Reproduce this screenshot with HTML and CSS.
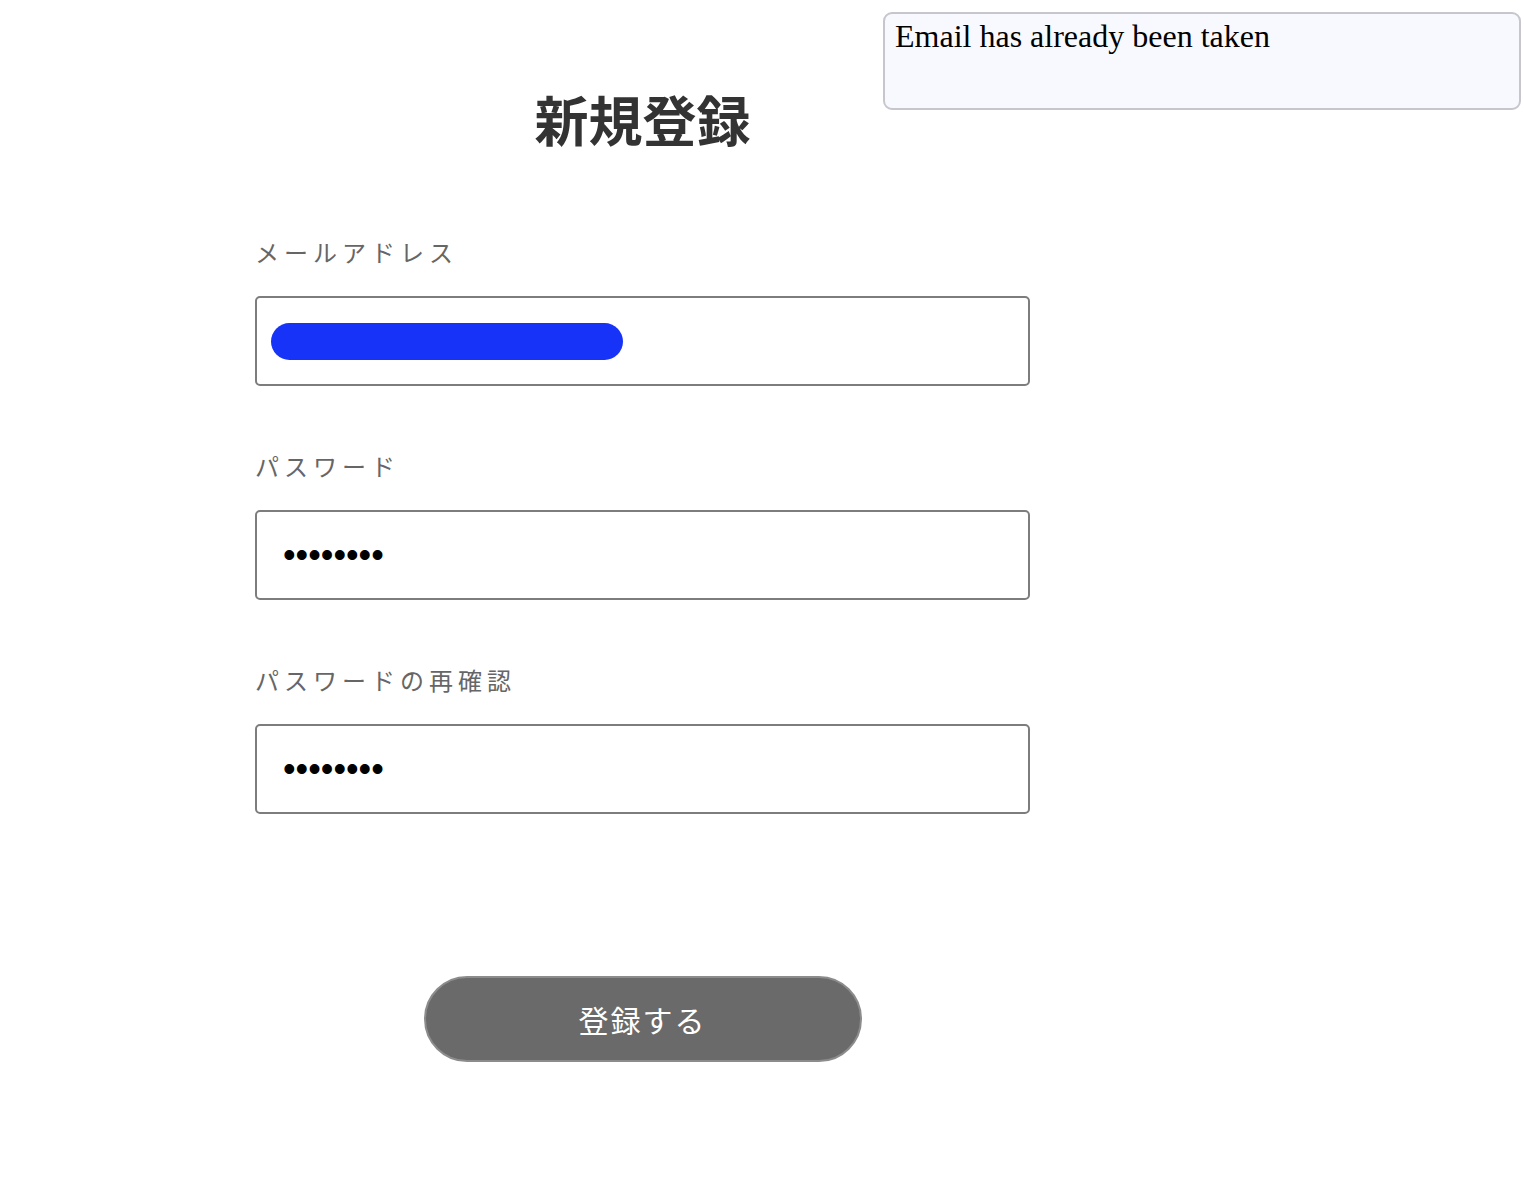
FILE: index.html
```html
<!DOCTYPE html>
<html lang="ja">
<head>
  <meta charset="UTF-8">
  <meta name="viewport" content="width=device-width, initial-scale=1.0">
  <title>新規登録</title>
  <link rel="stylesheet" href="styles.css">
</head>
<body>
  <div class="flash">Email has already been taken</div>

  <main class="signup">
    <h1 class="signup-title">新規登録</h1>

    <form class="signup-form">
      <div class="field">
        <label class="field-label" for="email">メールアドレス</label>
        <div class="field-box">
          <input class="field-input" type="email" id="email" value="">
          <span class="redacted"></span>
        </div>
      </div>

      <div class="field">
        <label class="field-label" for="password">パスワード</label>
        <div class="field-box">
          <input class="field-input" type="password" id="password" value="password">
        </div>
      </div>

      <div class="field">
        <label class="field-label" for="password-confirm">パスワードの再確認</label>
        <div class="field-box">
          <input class="field-input" type="password" id="password-confirm" value="password">
        </div>
      </div>

      <div class="actions">
        <button class="submit" type="submit">登録する</button>
      </div>
    </form>
  </main>
</body>
</html>
```

FILE: styles.css
```css
body {
  margin: 0;
  background: #fff;
  font-family: "Liberation Serif", "Noto Sans CJK JP", serif;
}

/* エラーメッセージ */
.flash {
  position: absolute;
  top: 12px;
  right: 3px;
  width: 638px;
  height: 98px;
  box-sizing: border-box;
  padding: 3px 10px;
  border: 2px solid #c6c6cc;
  border-radius: 9px;
  background: #f8f8ff;
  color: #000;
  font-size: 32px;
  line-height: 38px;
}

/* フォーム */
.signup {
  width: 775px;
  margin-left: 255px;
  padding-top: 90px;
}
.signup-title {
  margin: 0;
  text-align: center;
  color: #333;
  font-size: 54px;
  line-height: 68px;
  font-weight: bold;
}
.signup-form {
  margin-top: 78px;
}
.field + .field {
  margin-top: 64px;
}
.field-label {
  display: block;
  color: #666;
  font-size: 24px;
  line-height: 36px;
  letter-spacing: 5px;
}
.field-box {
  position: relative;
  margin-top: 24px;
}
.field-input {
  display: block;
  width: 100%;
  height: 90px;
  box-sizing: border-box;
  padding: 0 26px;
  border: 2px solid #7d7d7d;
  border-radius: 5px;
  background: #fff;
  color: #000;
  font-family: "Liberation Sans", sans-serif;
  font-size: 36px;
  letter-spacing: 0;
  outline: none;
}
.redacted {
  position: absolute;
  left: 16px;
  top: 27px;
  width: 352px;
  height: 37px;
  border-radius: 19px;
  background: #1733f7;
}

/* ボタン */
.actions {
  display: flex;
  justify-content: center;
  margin-top: 162px;
}
.submit {
  width: 438px;
  height: 86px;
  border: 2px solid #8c8c8c;
  border-radius: 43px;
  background: #6a6a6a;
  color: #fff;
  font-family: "Liberation Serif", "Noto Sans CJK JP", serif;
  font-size: 30px;
  letter-spacing: 2px;
  cursor: pointer;
}
```
